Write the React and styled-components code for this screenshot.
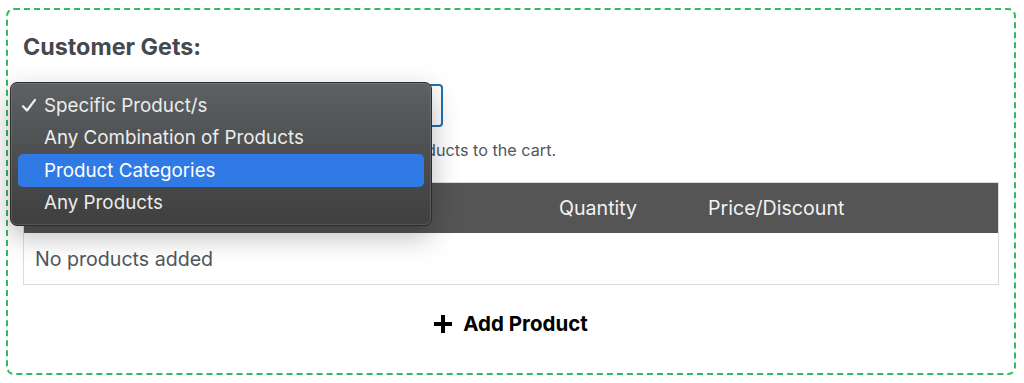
import React from 'react';
import styled, { createGlobalStyle } from 'styled-components';

const GlobalStyle = createGlobalStyle`
  body {
    margin: 0;
    background: #ffffff;
    font-family: Inter, "Liberation Sans", sans-serif;
  }
`;

const Frame = styled.div`
  margin: 8px 8px 8px 6px;
  border: 2px dashed #35b95a;
  border-radius: 8px;
  padding: 24px 15px 24px 15px;
  height: 367px;
  box-sizing: border-box;
`;

const Title = styled.h3`
  margin: 0;
  font-size: 23.3px;
  line-height: 26px;
  font-weight: 700;
  color: #45494d;
`;

const SelectWrap = styled.div`
  position: relative;
  margin-top: 24px;
  width: 420px;
`;

const SelectBox = styled.div`
  height: 43px;
  box-sizing: border-box;
  border: 2px solid #2271b1;
  border-radius: 4px;
  background: #fff;
`;

const Menu = styled.ul`
  position: absolute;
  left: -13px;
  top: -2px;
  width: 422px;
  margin: 0;
  padding: 6px 7px;
  box-sizing: border-box;
  list-style: none;
  border-radius: 7px;
  border: 1px solid #2c2c2c;
  background: linear-gradient(180deg, #5d6163 0%, #4b4d4e 55%, #3f3f3f 100%);
  box-shadow: inset 0 0 0 1px rgba(255, 255, 255, 0.12), 0 10px 28px rgba(0, 0, 0, 0.28);
  z-index: 2;
`;

const MenuItem = styled.li`
  display: flex;
  align-items: center;
  height: 32.5px;
  padding-left: 26px;
  position: relative;
  border-radius: 5px;
  font-size: 18.8px;
  background: ${(p) => (p.$active ? '#2f7ae5' : 'transparent')};
  color: ${(p) => (p.$active ? '#ffffff' : '#ececec')};
`;

const Check = styled.svg`
  position: absolute;
  left: 3px;
  top: 9px;
`;

const HelpText = styled.p`
  margin: 13px 0 0 0;
  font-size: 16.2px;
  line-height: 20px;
  color: #50575e;
`;

const Table = styled.div`
  margin-top: 22px;
  border: 1px solid #dcdcde;
`;

const HeadRow = styled.div`
  display: grid;
  grid-template-columns: 524px 149px 1fr;
  height: 50px;
  align-items: center;
  background: #555555;
  color: #f2f2f2;
  font-size: 19.6px;
`;

const HeadCell = styled.div`
  padding-left: 11px;
`;

const EmptyRow = styled.div`
  height: 51px;
  display: flex;
  align-items: center;
  padding-left: 11px;
  font-size: 19.6px;
  color: #50575e;
`;

const AddButton = styled.button`
  display: flex;
  align-items: center;
  gap: 11px;
  margin: 26px auto 0;
  padding: 0;
  border: none;
  background: none;
  font-family: inherit;
  font-size: 20.5px;
  font-weight: 700;
  color: #000;
  cursor: pointer;
`;

const PlusIcon = () => (
  <svg width="18" height="18" viewBox="0 0 18 18">
    <path d="M7 0h4v7h7v4h-7v7H7v-7H0V7h7z" fill="#000" />
  </svg>
);

const options = ['Specific Product/s', 'Any Combination of Products', 'Product Categories', 'Any Products'];

export default function App() {
  return (
    <>
      <GlobalStyle />
      <Frame>
        <Title>Customer Gets:</Title>
        <SelectWrap>
          <SelectBox />
          <Menu>
            {options.map((o, i) => (
              <MenuItem key={o} $active={i === 2}>
                {i === 0 && (
                  <Check width="16" height="15" viewBox="0 0 16 15">
                    <path d="M2 8.2l4 4.3L14 1.8" fill="none" stroke="#f0f0f0" strokeWidth="2.2" strokeLinecap="round" strokeLinejoin="round" />
                  </Check>
                )}
                {o}
              </MenuItem>
            ))}
          </Menu>
        </SelectWrap>
        <HelpText>The customer gets these when adding qualifying products to the cart.</HelpText>
        <Table>
          <HeadRow>
            <HeadCell>Product</HeadCell>
            <HeadCell>Quantity</HeadCell>
            <HeadCell>Price/Discount</HeadCell>
          </HeadRow>
          <EmptyRow>No products added</EmptyRow>
        </Table>
        <AddButton>
          <PlusIcon />
          Add Product
        </AddButton>
      </Frame>
    </>
  );
}
